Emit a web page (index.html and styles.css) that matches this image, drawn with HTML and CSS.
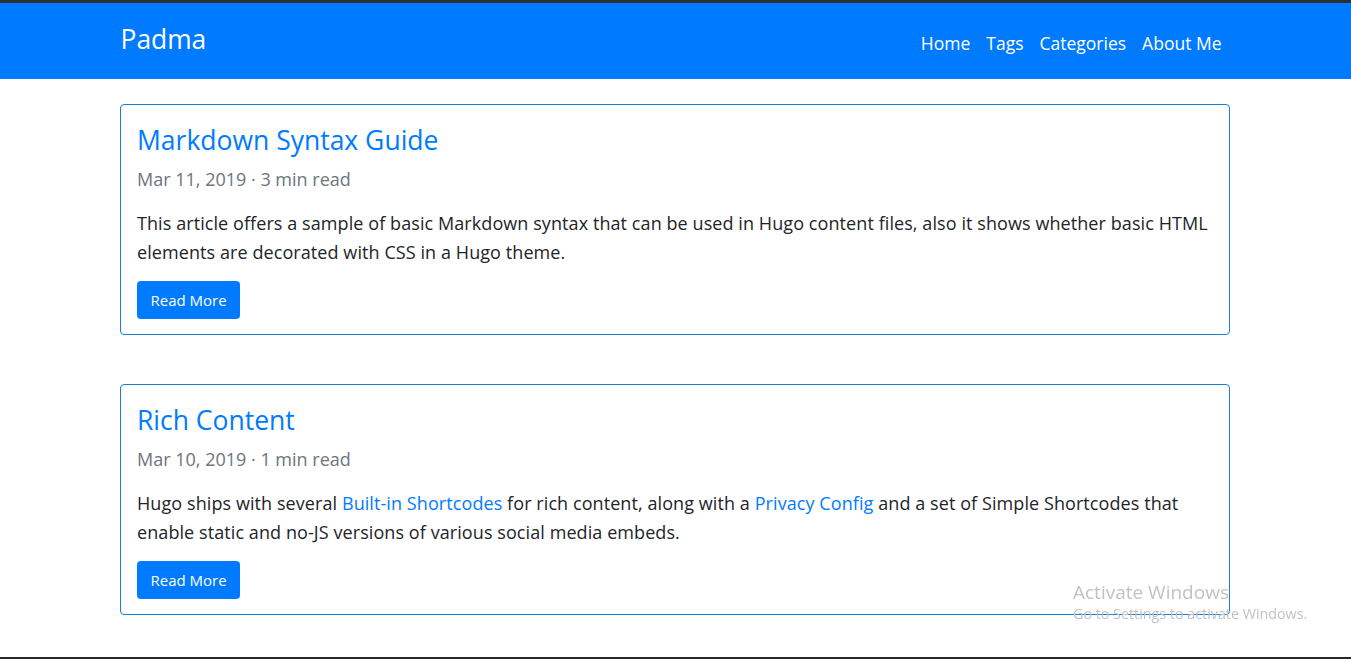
FILE: index.html
```html
<!DOCTYPE html>
<html lang="en">
<head>
<meta charset="utf-8">
<title>Padma</title>
<link rel="stylesheet" href="styles.css">
</head>
<body>
<header class="navbar">
  <div class="container nav-inner">
    <a class="brand" href="#">Padma</a>
    <nav class="nav-links">
      <a href="#">Home</a>
      <a href="#">Tags</a>
      <a href="#">Categories</a>
      <a href="#">About Me</a>
    </nav>
  </div>
</header>
<main class="container posts">
  <article class="card">
    <h3 class="card-title"><a href="#">Markdown Syntax Guide</a></h3>
    <p class="meta">Mar 11, 2019 · 3 min read</p>
    <p class="summary">This article offers a sample of basic Markdown syntax that can be used in Hugo content files, also it shows whether basic HTML elements are decorated with CSS in a Hugo theme.</p>
    <a class="btn" href="#">Read More</a>
  </article>
  <article class="card">
    <h3 class="card-title"><a href="#">Rich Content</a></h3>
    <p class="meta">Mar 10, 2019 · 1 min read</p>
    <p class="summary">Hugo ships with several <a href="#">Built-in Shortcodes</a> for rich content, along with a <a href="#">Privacy Config</a> and a set of Simple Shortcodes that enable static and no-JS versions of various social media embeds.</p>
    <a class="btn" href="#">Read More</a>
  </article>
</main>
<div class="watermark">
  <div class="wm-title">Activate Windows</div>
  <div class="wm-sub">Go to Settings to activate Windows.</div>
</div>
<div class="taskbar"></div>
</body>
</html>
```
FILE: styles.css
```css
* { box-sizing: border-box; }
html, body { margin: 0; padding: 0; }
body {
  font-family: "Open Sans", "Noto Sans", sans-serif;
  color: #212529;
  background: #fff;
  font-size: 16px;
  line-height: 1.5;
  padding-right: 1px;
}
a { color: #007bff; text-decoration: none; }
.container {
  width: 1140px;
  margin: 0 auto;
  padding: 0 15px;
}
.navbar {
  background: #007bff;
  border-top: 3px solid #2a2f35;
  height: 79px;
  margin-right: -1px;
}
.nav-inner {
  height: 76px;
  display: flex;
  align-items: center;
  justify-content: space-between;
}
.brand {
  color: #fff;
  font-size: 26.4px;
  line-height: 1;
  margin-top: -4px;
}
.nav-links {
  display: flex;
  margin-top: 4px;
  margin-right: 1px;
}
.nav-links a {
  color: #fff;
  font-size: 17.5px;
  padding: 0 8px;
}
.posts {
  padding-top: 25px;
  display: flex;
  flex-direction: column;
  gap: 49px;
}
.card {
  border: 1px solid #1a7fd8;
  border-radius: 4px;
  padding: 17px 16px 14px;
  height: 231px;
}
.card-title {
  margin: 0;
  font-size: 26.5px;
  font-weight: 400;
  line-height: 36px;
}
.meta {
  margin: 8px 0 0;
  color: #6c757d;
  font-size: 18px;
  line-height: 27px;
}
.summary {
  margin: 16px 0 0;
  font-size: 18px;
  line-height: 29px;
  letter-spacing: 0.08px;
}
.btn {
  display: inline-block;
  margin-top: 14px;
  background: #007bff;
  color: #fff;
  font-size: 15px;
  line-height: 24px;
  padding: 7px 13.5px;
  border-radius: 4px;
}
.watermark {
  position: fixed;
  left: 1073px;
  top: 579px;
  color: #c2c2c2;
  font-family: "Open Sans", sans-serif;
  pointer-events: none;
}
.wm-title { font-size: 19px; line-height: 26px; }
.wm-sub { font-size: 14.3px; line-height: 18px; }
.taskbar {
  position: fixed;
  left: 0; right: 0; bottom: 0;
  height: 2px;
  background: #1f2b31;
}
```
